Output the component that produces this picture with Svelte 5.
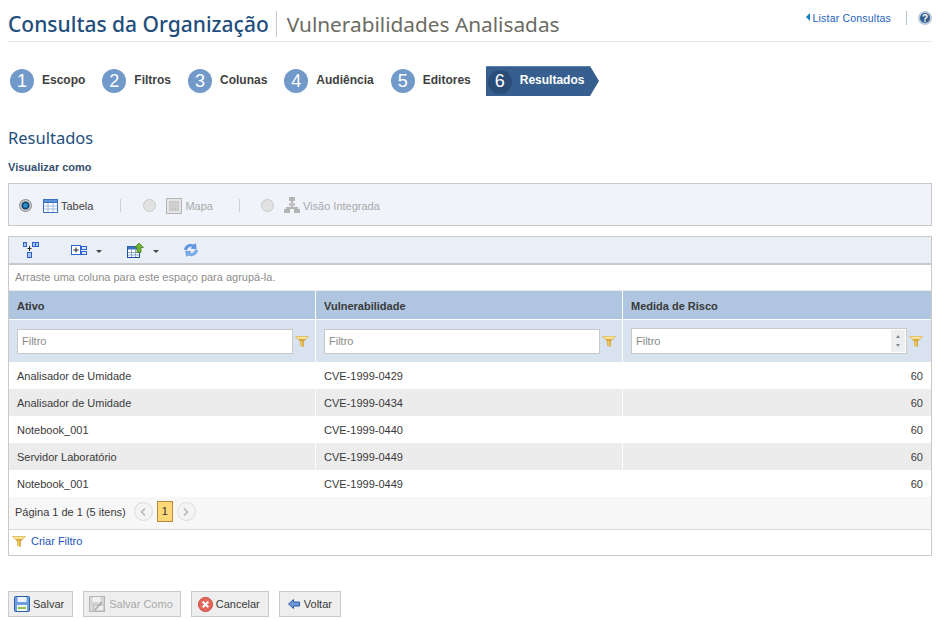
<script>
  const steps = [
    { n: 1, label: 'Escopo' },
    { n: 2, label: 'Filtros' },
    { n: 3, label: 'Colunas' },
    { n: 4, label: 'Audiência' },
    { n: 5, label: 'Editores' }
  ];

  const rows = [
    ['Analisador de Umidade', 'CVE-1999-0429', 60],
    ['Analisador de Umidade', 'CVE-1999-0434', 60],
    ['Notebook_001', 'CVE-1999-0440', 60],
    ['Servidor Laboratório', 'CVE-1999-0449', 60],
    ['Notebook_001', 'CVE-1999-0449', 60]
  ];
</script>

{#snippet funnel()}
  <svg class="funnel" width="14" height="11" viewBox="0 0 14 11">
    <path d="M0 0h14L8.800 5.500V11l-3.600-1.200V5.500z" fill="#d9a73c" />
    <path d="M1 0.500h12L10.500 3h-7z" fill="#f6e39a" />
    <path d="M6 5h1.200v5H6z" fill="#f0cf6a" />
  </svg>
{/snippet}

<div class="page">
  <header class="top">
    <h1>Consultas da Organização</h1>
    <h2>Vulnerabilidades Analisadas</h2>
    <div class="top-right">
      <a class="back-link" href="#list"><span class="tri"></span>Listar Consultas</a>
      <span class="help">?</span>
    </div>
  </header>

  <nav class="steps">
    {#each steps as s}
      <div class="step">
        <span class="num">{s.n}</span>
        <span class="step-label">{s.label}</span>
      </div>
    {/each}
    <div class="step active">
      <span class="num">6</span>
      <span class="step-label">Resultados</span>
    </div>
  </nav>

  <h3>Resultados</h3>
  <div class="view-label">Visualizar como</div>

  <div class="view-panel">
    <span class="radio on"></span>
    <svg class="ic" width="16" height="14" viewBox="0 0 16 14">
      <rect x="0.500" y="0.500" width="14" height="13" fill="#fff" stroke="#3a70c0" />
      <rect x="0.500" y="0.500" width="14" height="3" fill="#5f93d8" stroke="#3a70c0" />
      <path d="M5 4v9M10 4v9M1 7h13M1 10h13" stroke="#9dbbe2" />
    </svg>
    <span class="view-text first">Tabela</span>
    <span class="sep"></span>
    <span class="radio"></span>
    <svg class="ic" width="16" height="16" viewBox="0 0 16 16">
      <rect x="0.500" y="0.500" width="15" height="15" fill="#e6e6e6" stroke="#b4b4b4" />
      <rect x="3" y="3" width="10" height="10" fill="#c4c4c4" />
      <path d="M5 3v10M8 3v10M11 3v10M3 6h10M3 9h10" stroke="#d8d8d8" />
    </svg>
    <span class="view-text off">Mapa</span>
    <span class="sep sep2"></span>
    <span class="radio"></span>
    <svg class="ic" width="16" height="17" viewBox="0 0 16 17">
      <rect x="5" y="0" width="6" height="4" fill="#b4b4b4" />
      <rect x="7" y="4" width="2" height="8" fill="#b4b4b4" />
      <rect x="5" y="6" width="6" height="3" fill="#c4c4c4" />
      <rect x="2" y="10" width="12" height="2" fill="#b4b4b4" />
      <rect x="0" y="12" width="6" height="4" fill="#b4b4b4" />
      <rect x="10" y="12" width="6" height="4" fill="#b4b4b4" />
    </svg>
    <span class="view-text off">Visão Integrada</span>
  </div>

  <div class="grid">
    <div class="toolbar">
      <svg class="tool t1" width="16" height="16" viewBox="0 0 16 16">
        <rect x="0.500" y="0.500" width="3" height="4" fill="#a9c4ee" stroke="#2f62d0" />
        <rect x="9.500" y="0.500" width="3" height="4" fill="#a9c4ee" stroke="#2f62d0" />
        <rect x="12.500" y="0.500" width="3" height="4" fill="#a9c4ee" stroke="#2f62d0" />
        <rect x="4.500" y="10.500" width="4" height="5" fill="#a9c4ee" stroke="#2f62d0" />
        <path d="M6.500 4v5M4.500 6.500h4" stroke="#222" />
      </svg>
      <svg class="tool t2" width="16" height="11" viewBox="0 0 16 11">
        <rect x="0.500" y="0.500" width="9" height="9" fill="#fff" stroke="#2f62d0" />
        <path d="M2.500 5h5M5 2.500v5" stroke="#222" />
        <rect x="10.500" y="1.500" width="5" height="3" fill="#dbe6f8" stroke="#2f62d0" />
        <rect x="10.500" y="6.500" width="5" height="3" fill="#dbe6f8" stroke="#2f62d0" />
      </svg>
      <span class="caret"></span>
      <svg class="tool t3" width="17" height="15" viewBox="0 0 17 15">
        <rect x="0.500" y="3.500" width="12" height="11" fill="#fff" stroke="#1f4f9c" />
        <rect x="0.500" y="3.500" width="12" height="3" fill="#3f73c4" />
        <path d="M4.500 6v8M8.500 6v8M1 9.500h11M1 12h11" stroke="#8fa9cf" />
        <path d="M12 0l4.500 4.500h-2.500v5h-4v-5h-2.500z" fill="#6fb12f" stroke="#3f7a18" stroke-width="0.700" />
      </svg>
      <span class="caret"></span>
      <svg class="tool t4" width="16" height="16" viewBox="0 0 16 16">
        <path d="M1.500 7.500C2 3.500 6.500 1 11 3l1.500-1.500.8 5.500-5.300-.8L10 4.600C7.500 3.700 5 4.700 4 7.500z" fill="#5d97e6" stroke="#3f78cc" stroke-width="0.500" />
        <path d="M14.500 8.500c-.5 4-5 6.500-9.500 4.500l-1.500 1.500-.8-5.500 5.300.8L6 11.400c2.500.9 5-.1 6-2.900z" fill="#7fb0ee" stroke="#3f78cc" stroke-width="0.500" />
      </svg>
    </div>
    <div class="group-hint">Arraste uma coluna para este espaço para agrupá-la.</div>

    <div class="table-row head">
      <div class="cell">Ativo</div>
      <div class="cell">Vulnerabilidade</div>
      <div class="cell">Medida de Risco</div>
    </div>

    <div class="table-row filters">
      <div class="cell">
        <span class="filter-input">Filtro</span>
        {@render funnel()}
      </div>
      <div class="cell">
        <span class="filter-input">Filtro</span>
        {@render funnel()}
      </div>
      <div class="cell last-filter">
        <span class="filter-input num-input">
          Filtro
          <span class="spin"><i class="up"></i><i class="down"></i></span>
        </span>
        {@render funnel()}
      </div>
    </div>

    {#each rows as r, i}
      <div class="table-row data" class:alt={i % 2 === 1}>
        <div class="cell">{r[0]}</div>
        <div class="cell">{r[1]}</div>
        <div class="cell right">{r[2]}</div>
      </div>
    {/each}

    <div class="pager">
      <span class="pager-text">Página 1 de 1 (5 itens)</span>
      <span class="page-arrow">
        <svg width="6" height="8" viewBox="0 0 6 8"><path d="M5 0.500L1.500 4 5 7.500" fill="none" stroke="#b5b5b5" stroke-width="1.500" /></svg>
      </span>
      <span class="page-current">1</span>
      <span class="page-arrow">
        <svg width="6" height="8" viewBox="0 0 6 8"><path d="M1 0.500L4.500 4 1 7.500" fill="none" stroke="#b5b5b5" stroke-width="1.500" /></svg>
      </span>
    </div>

    <div class="create-filter">
      {@render funnel()}
      <a href="#filter">Criar Filtro</a>
    </div>
  </div>

  <div class="actions">
    <button>
      <svg width="16" height="16" viewBox="0 0 16 16">
        <rect x="0.500" y="0.500" width="15" height="15" rx="1" fill="#6d9fe0" stroke="#2b5ea8" />
        <rect x="3.500" y="1" width="9" height="5" fill="#eef3fb" />
        <rect x="3" y="9" width="10" height="6" fill="#f4f7e8" />
        <rect x="4" y="11" width="8" height="2" fill="#8cc063" />
      </svg>
      Salvar
    </button>
    <button class="disabled">
      <svg width="16" height="16" viewBox="0 0 16 16">
        <rect x="0.500" y="0.500" width="15" height="15" fill="#d6d6d6" stroke="#b5b5b5" />
        <rect x="3.500" y="1" width="8" height="5" fill="#f0f0f0" />
        <rect x="5" y="9" width="10" height="6" fill="#eee" stroke="#b5b5b5" />
        <path d="M6 14l7-8" stroke="#a8a8a8" stroke-width="1.500" />
      </svg>
      Salvar Como
    </button>
    <button class="cancel">
      <svg width="15" height="15" viewBox="0 0 15 15">
        <circle cx="7.500" cy="7.500" r="7" fill="#e2685c" stroke="#c9453a" />
        <path d="M4.700 4.700l5.600 5.600M10.300 4.700l-5.600 5.600" stroke="#fff" stroke-width="2" />
      </svg>
      Cancelar
    </button>
    <button class="back">
      <svg width="12" height="10" viewBox="0 0 12 10">
        <path d="M0.500 5L5.500 0.500V3h6v4h-6v2.500z" fill="#6f9ad6" stroke="#2b5ea8" />
      </svg>
      Voltar
    </button>
  </div>
</div>

<style>
  :global(body) {
    margin: 0;
    background: #fff;
  }

  .page {
    width: 941px;
    height: 621px;
    overflow: hidden;
    box-sizing: border-box;
    padding: 0 9px 0 8px;
    font-family: 'Liberation Sans', Arial, sans-serif;
    font-size: 11px;
    color: #333;
  }

  .top {
    display: flex;
    align-items: flex-start;
    height: 41px;
    border-bottom: 1px solid #e6e8ec;
  }

  h1 {
    margin: 11px 0 0;
    padding: 0 7px 0 0;
    height: 26px;
    line-height: 27px;
    font-family: 'Noto Sans', 'Open Sans', sans-serif;
    font-size: 21px;
    font-weight: 500;
    color: #234e7c;
    border-right: 1px solid #c8c8c8;
    white-space: nowrap;
  }

  h2 {
    margin: 11px 0 0;
    padding: 0 0 0 10px;
    height: 26px;
    line-height: 27px;
    font-family: 'Noto Sans', 'Open Sans', sans-serif;
    font-size: 20.800px;
    font-weight: 400;
    color: #6b6b63;
    white-space: nowrap;
  }

  .top-right {
    margin-left: auto;
    margin-top: 11px;
    display: flex;
    align-items: center;
    height: 14px;
  }

  .back-link {
    color: #1c62b9;
    text-decoration: none;
    font-size: 10.500px;
    display: flex;
    align-items: center;
    letter-spacing: 0.200px;
  }

  .tri {
    width: 0;
    height: 0;
    border-style: solid;
    border-width: 4px 4px 4px 0;
    border-color: transparent #1180c4 transparent transparent;
    margin: -3px 3px 0 0;
  }

  .help {
    margin-left: 15px;
    border-left: 1px solid #b8c4d2;
    padding-left: 11px;
    height: 14px;
    display: flex;
    align-items: center;
    position: relative;
    color: #fff;
    font-size: 10px;
    font-weight: bold;
    width: 14px;
    justify-content: center;
    z-index: 0;
  }

  .help::before {
    content: '';
    position: absolute;
    left: 11px;
    top: 0;
    width: 10px;
    height: 10px;
    border-radius: 50%;
    background: #35608f;
    border: 2px solid #b9c8da;
    z-index: -1;
  }

  .steps {
    display: flex;
    align-items: center;
    height: 30px;
    margin-top: 24px;
    padding-left: 2px;
  }

  .step {
    display: flex;
    align-items: center;
    margin-right: 17px;
    font-weight: bold;
    font-size: 12px;
    color: #3f3f3f;
  }

  .num {
    width: 24px;
    height: 24px;
    border-radius: 50%;
    background: #7199ca;
    color: #fff;
    font-size: 18px;
    font-weight: normal;
    display: flex;
    align-items: center;
    justify-content: center;
    margin-right: 8px;
  }

  .step-label {
    margin-top: -3px;
  }

  .step.active {
    position: relative;
    height: 30px;
    width: 104px;
    margin-left: -2px;
    background: #365f8f;
    border-top: 1px solid #5a82ad;
    box-sizing: border-box;
    color: #fff;
    padding-left: 2px;
  }

  .step.active::after {
    content: '';
    position: absolute;
    top: -1px;
    right: -9px;
    border-style: solid;
    border-width: 15px 0 15px 9px;
    border-color: transparent transparent transparent #365f8f;
  }

  .step.active .num {
    background: #2a4d78;
  }

  h3 {
    margin: 31px 0 0;
    height: 22px;
    line-height: 22px;
    font-family: 'Noto Sans', 'Open Sans', sans-serif;
    font-size: 16.500px;
    font-weight: 400;
    color: #234e7c;
  }

  .view-label {
    margin-top: 12px;
    height: 13px;
    line-height: 13px;
    font-weight: bold;
    color: #35506e;
  }

  .view-panel {
    margin-top: 9px;
    height: 43px;
    box-sizing: border-box;
    background: #f0f3f9;
    border: 1px solid #c9c9c9;
    display: flex;
    align-items: center;
    padding: 2px 0 0 10px;
  }

  .radio {
    width: 11px;
    height: 11px;
    border-radius: 50%;
    background: #e2e2e2;
    border: 1px solid #c8c8c8;
    margin-right: 10px;
  }

  .radio.on {
    margin-right: 11px;
    background: radial-gradient(circle, #2a8fd0 0 1.500px, #123a5c 3.500px, #c8ccd2 4.500px);
    border-color: #8a8a8a;
  }

  .ic {
    margin-right: 2px;
    flex: none;
  }

  .view-text {
    color: #3f3f3f;
    margin-left: 1px;
  }

  .view-text.first {
    margin-left: 0;
  }

  .view-text.off {
    color: #a9a9a9;
  }

  .sep {
    width: 1px;
    height: 13px;
    background: #cdd2da;
    margin: 0 22px 0 27px;
  }

  .sep2 {
    margin: 0 21px 0 26px;
  }

  .grid {
    margin-top: 10px;
    border: 1px solid #c9c9c9;
  }

  .toolbar {
    display: flex;
    align-items: center;
    height: 26px;
    background: #e9eef7;
    border-bottom: 2px solid #c9c9c9;
  }

  .tool {
    flex: none;
  }

  .t1 {
    margin-left: 14px;
  }

  .t2 {
    margin-left: 32px;
  }

  .t4 {
    margin-left: -1px;
  }

  .caret {
    width: 0;
    height: 0;
    border-style: solid;
    border-width: 3.500px 3.500px 0;
    border-color: #444 transparent transparent;
    margin: 3px 25px 0 9px;
  }

  .group-hint {
    height: 26px;
    box-sizing: border-box;
    line-height: 24px;
    padding-left: 6px;
    color: #8d8d8d;
    border-bottom: 1px solid #e8e8e8;
  }

  .table-row {
    display: grid;
    grid-template-columns: 307px 307px 1fr;
  }

  .cell {
    box-sizing: border-box;
    padding: 0 8px;
    display: flex;
    align-items: center;
    border-right: 1px solid #fff;
  }

  .cell:last-child {
    border-right: 0;
  }

  .head {
    height: 29px;
    background: #afc5e0;
    font-weight: bold;
    color: #3a3a3a;
    border-bottom: 1px solid #fff;
    box-sizing: border-box;
  }

  .head .cell {
    padding-top: 2px;
  }

  .filters {
    height: 42px;
    background: #d8e3ef;
  }

  .filter-input {
    flex: 1;
    height: 25px;
    box-sizing: border-box;
    background: #fff;
    border: 1px solid #c9c9c9;
    line-height: 23px;
    padding-left: 4px;
    color: #8a8a8a;
  }

  .num-input {
    position: relative;
    height: 26px;
    line-height: 24px;
  }

  .spin {
    position: absolute;
    right: 1px;
    top: 1px;
    width: 14px;
    height: 22px;
    background: #eceef0;
  }

  .spin i {
    position: absolute;
    left: 5px;
    border-style: solid;
    width: 0;
    height: 0;
  }

  .spin .up {
    top: 5px;
    border-width: 0 2px 3px;
    border-color: transparent transparent #888;
  }

  .spin .down {
    bottom: 5px;
    border-width: 3px 2px 0;
    border-color: #888 transparent transparent;
  }

  .funnel {
    flex: none;
    margin-left: 2px;
    margin-right: -2px;
  }

  .last-filter .funnel {
    margin-right: 0;
  }

  .data {
    height: 27px;
    background: #fff;
    color: #3a3a3a;
  }

  .data.alt {
    background: #ececec;
  }

  .right {
    justify-content: flex-end;
  }

  .pager {
    display: flex;
    align-items: center;
    height: 33px;
    box-sizing: border-box;
    background: #f7f7f7;
    border-bottom: 1px solid #d9d9d9;
    padding: 0 0 3px 6px;
    color: #3a3a3a;
  }

  .pager-text {
    margin-right: 8px;
  }

  .page-arrow {
    width: 17px;
    height: 17px;
    border: 1px solid #dcdcdc;
    border-radius: 50%;
    background: #f4f4f4;
    display: flex;
    align-items: center;
    justify-content: center;
  }

  .page-current {
    width: 16px;
    height: 21px;
    box-sizing: border-box;
    background: #fdd877;
    border: 1px solid #b88a3a;
    margin: 0 4px;
    text-align: center;
    line-height: 19px;
    color: #333;
  }

  .create-filter {
    display: flex;
    align-items: center;
    height: 25px;
    box-sizing: border-box;
    padding: 0 0 3px 1px;
  }

  .create-filter .funnel {
    margin-right: 0;
  }

  .create-filter a {
    color: #1c55b4;
    text-decoration: none;
    margin-left: 5px;
  }

  .actions {
    display: flex;
    gap: 10px;
    margin-top: 35px;
  }

  button {
    display: flex;
    align-items: center;
    gap: 3px;
    height: 26px;
    box-sizing: border-box;
    padding: 0 8px 0 5px;
    background: #eee;
    border: 1px solid #c9c9c9;
    font-family: inherit;
    font-size: 11px;
    color: #3a3a3a;
  }

  button.disabled {
    color: #a9a9a9;
    gap: 4px;
    padding-right: 7px;
  }

  button.cancel {
    padding-left: 6px;
  }

  button.back {
    padding: 0 8px;
    gap: 4px;
  }
</style>
